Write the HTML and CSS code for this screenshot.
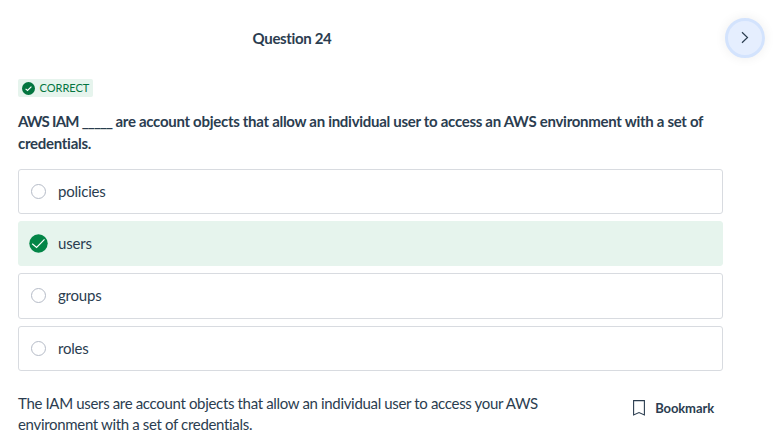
FILE: index.html
```html
<!DOCTYPE html>
<html lang="en">
<head>
<meta charset="utf-8">
<title>Question 24</title>
<link rel="stylesheet" href="styles.css">
</head>
<body>
<header class="top">
  <h1 class="title">Question 24</h1>
  <button class="next" aria-label="Next"><svg width="16" height="16" viewBox="0 0 16 16"><path d="M5 2.2 10.5 7.5 5 12.8" fill="none" stroke="currentColor" stroke-width="1.2"/></svg></button>
</header>
<main class="question">
  <div class="badge"><svg width="13" height="13" viewBox="0 0 20 20"><circle cx="10" cy="10" r="10" fill="#03753f"/><path d="M5.5 10.5 8.5 13 14.5 7" fill="none" stroke="#fff" stroke-width="1.8"/></svg><span>CORRECT</span></div>
  <p class="prompt"><span class="lead">AWS IAM _____ </span>are account objects that allow an individual user to access an AWS environment with a set of credentials.</p>
  <ul class="options">
    <li class="option"><span class="radio"></span>policies</li>
    <li class="option selected"><svg class="check" width="19" height="19" viewBox="0 0 19 19"><circle cx="9.5" cy="9.5" r="9.2" fill="#038547"/><path d="M3.2 9.8 7.6 13.5 15.5 5.3" fill="none" stroke="#fff" stroke-width="1.2"/></svg>users</li>
    <li class="option"><span class="radio"></span>groups</li>
    <li class="option"><span class="radio"></span>roles</li>
  </ul>
  <div class="footer">
    <p class="explanation">The IAM users are account objects that allow an individual user to access your AWS environment with a set of credentials.</p>
    <button class="bookmark"><svg width="12" height="16" viewBox="0 0 12 16"><path d="M.6.6H11.4V15L6 12.6.6 15Z" fill="none" stroke="currentColor" stroke-width="1.1"/></svg>Bookmark</button>
  </div>
</main>
</body>
</html>
```
FILE: styles.css
```css
* { box-sizing: border-box; }
body { margin: 0; background: #fff; color: #2b3d50; font: 15px/22px Lato, sans-serif; letter-spacing: -.2px; overflow: hidden; }
button { border: 0; padding: 0; background: none; color: inherit; font: inherit; letter-spacing: inherit; }
.top { display: flex; justify-content: space-between; height: 79px; padding: 18px 12px 0 252.6px; }
.title { margin: 9px 0 0; font-size: 15px; line-height: 22px; font-weight: 700; letter-spacing: -.35px; }
.next { display: flex; align-items: center; justify-content: center; width: 40px; height: 40px; border: 3px solid #d3e3fd; border-radius: 50%; background: #e5eefe; box-shadow: 0 0 12px rgba(0, 0, 0, .07); }
.question { width: 705px; margin-left: 18px; }
.badge { display: flex; align-items: center; gap: 4.5px; width: 75px; height: 18px; padding-left: 4px; border-radius: 2px; background: #e6f4ed; color: #03753f; font-size: 11px; line-height: 18px; letter-spacing: 0; }
.prompt { margin: 13px 0 15px; font-weight: 700; letter-spacing: -.28px; word-spacing: -.05px; }
.lead { letter-spacing: -.9px; word-spacing: .5px; }
.options { display: grid; gap: 7.3px; margin: 0; padding: 0; list-style: none; }
.option { display: flex; align-items: center; height: 45px; padding-left: 12px; border: 1px solid #d8dbe0; border-radius: 3px; line-height: 20px; padding-bottom: 1px; }
.option:nth-child(3) { height: 46px; margin: -1px 0 0; padding-bottom: 2px; }
.selected { padding-left: 9.5px; border-color: #e6f4ed; background: #e6f4ed; }
.radio { width: 15px; height: 15px; margin: 1px 12px 0 0; border: 1px solid #b5bbc7; border-radius: 50%; }
.check { margin: 1px 10.5px 0 0; }
.footer { display: flex; justify-content: space-between; margin-top: 22px; }
.explanation { width: 550px; margin: 0; line-height: 21.5px; letter-spacing: -.32px; word-spacing: -.1px; }
.bookmark { display: flex; align-items: center; gap: 10px; height: 22px; margin: 4px 9px 0 0; font-size: 13px; font-weight: 700; letter-spacing: -.1px; }
```
